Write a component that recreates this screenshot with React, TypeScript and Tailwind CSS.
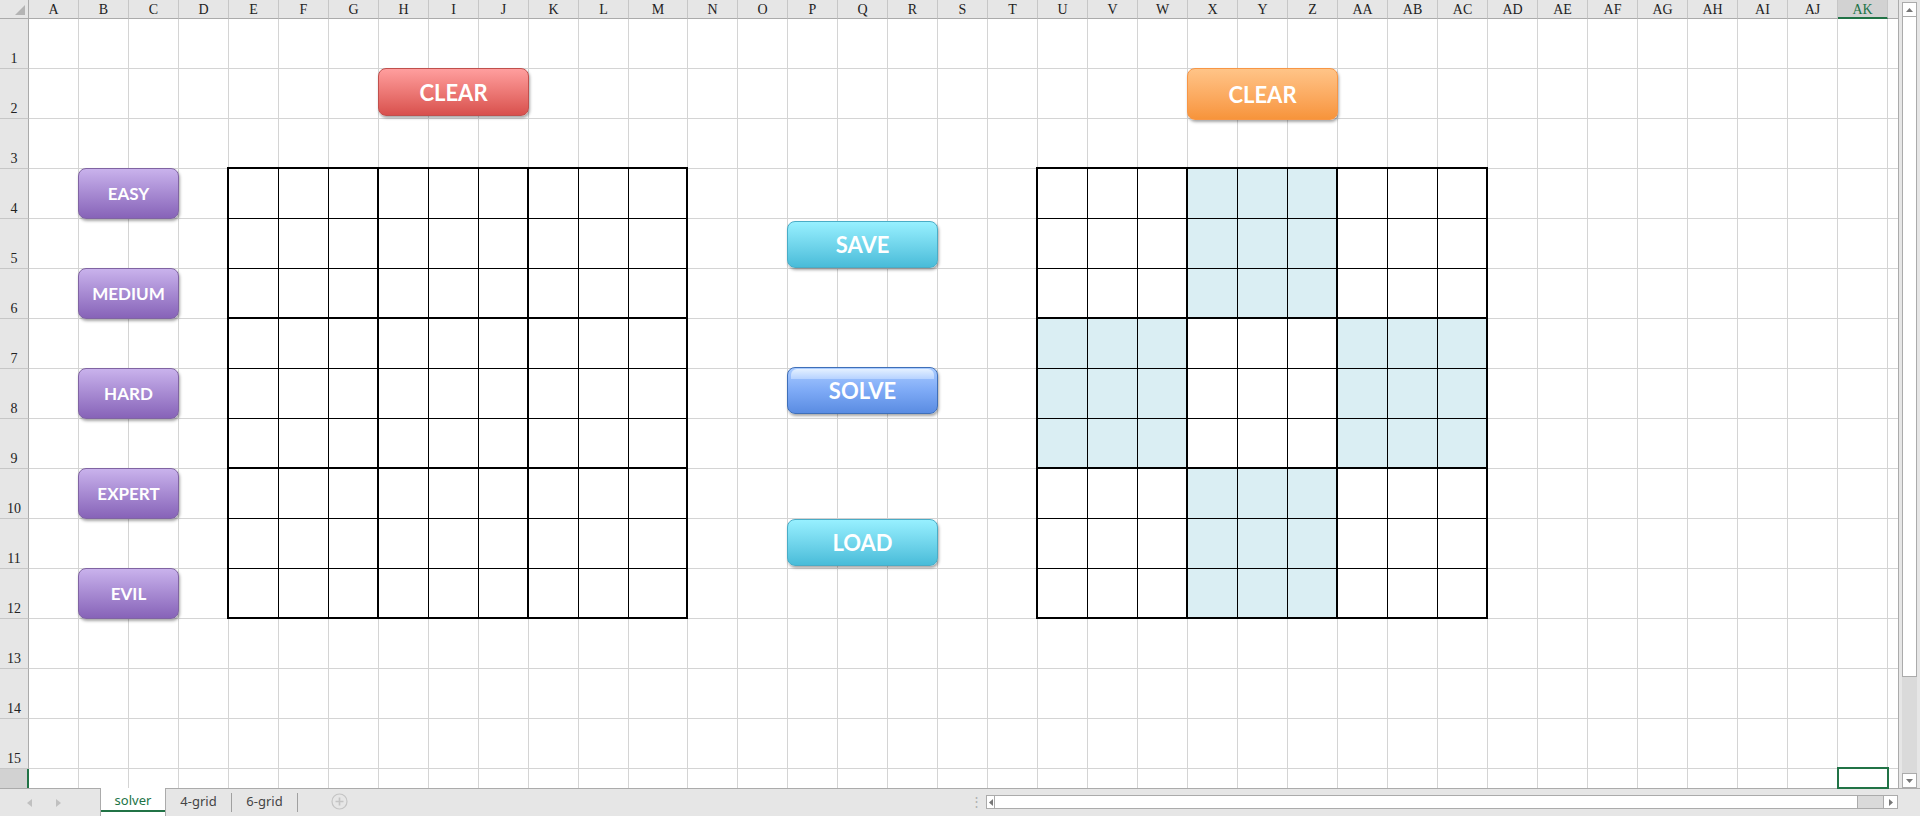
import React from "react";

const colNames: string[] = [];
for (let i = 0; i < 37; i++) {
  colNames.push(i < 26 ? String.fromCharCode(65 + i) : "A" + String.fromCharCode(65 + i - 26));
}
const rowNums = Array.from({ length: 15 }, (_, i) => i + 1);

function SheetHeader() {
  return (
    <>
      <div className="relative border-r border-b border-r-[#ababab] border-b-[#ababab] bg-[#e6e6e6]">
        <svg width="29" height="19" className="absolute inset-0">
          <polygon points="25,5 25,15 15,15" fill="#b4b4b4" />
        </svg>
      </div>
      {colNames.map((name) =>
        name === "AK" ? (
          <div
            key={name}
            className="flex items-center justify-center border-r border-b-2 border-r-[#c6c6c6] border-b-[#217346] bg-[#d2d2d2] pt-[1px] font-['Liberation_Serif',serif] text-[14px] text-[#217346]"
          >
            {name}
          </div>
        ) : (
          <div
            key={name}
            className="flex items-center justify-center border-r border-b border-r-[#c6c6c6] border-b-[#ababab] bg-[#e6e6e6] font-['Liberation_Serif',serif] text-[14px] text-[#222]"
          >
            {name}
          </div>
        )
      )}
      <div className="border-b border-b-[#ababab] bg-[#e6e6e6]" />
    </>
  );
}

function SheetRow({ n }: { n: number }) {
  return (
    <>
      <div className="flex items-end justify-center border-r border-b border-r-[#ababab] border-b-[#c6c6c6] bg-[#e6e6e6] pb-[1px] font-['Liberation_Serif',serif] text-[14px] leading-[16px] text-[#222]">
        {n}
      </div>
      {colNames.map((name) => (
        <div key={name} className="border-r border-b border-[#d4d4d4] bg-white" />
      ))}
      <div className="border-b border-[#d4d4d4] bg-white" />
    </>
  );
}

function LastRow() {
  return (
    <>
      <div className="border-r-2 border-r-[#217346] bg-[#d2d2d2]" />
      {colNames.map((name) => (
        <div key={name} className="border-r border-[#d4d4d4] bg-white" />
      ))}
      <div className="bg-white" />
    </>
  );
}

function Sudoku({ wideLast, shaded }: { wideLast?: boolean; shaded?: boolean }) {
  const cells = [];
  for (let r = 0; r < 9; r++) {
    for (let c = 0; c < 9; c++) {
      const box = Math.floor(r / 3) + Math.floor(c / 3);
      const fill = shaded && box % 2 === 1;
      cells.push(
        <div
          key={r * 9 + c}
          className={[
            "border-black",
            c % 3 === 2 ? "border-r-2" : "border-r",
            r % 3 === 2 ? "border-b-2" : "border-b",
            fill ? "bg-[#daeef3]" : "bg-white",
          ].join(" ")}
        />
      );
    }
  }
  return (
    <div
      className={
        wideLast
          ? "-ml-[2px] -mt-[2px] grid h-[452px] w-[461px] grid-cols-[repeat(8,50px)_59px] grid-rows-[repeat(9,50px)] border-l-2 border-t-2 border-black"
          : "-ml-[2px] -mt-[2px] grid h-[452px] w-[452px] grid-cols-[repeat(9,50px)] grid-rows-[repeat(9,50px)] border-l-2 border-t-2 border-black"
      }
    >
      {cells}
    </div>
  );
}

function ShapeButton({ label, className }: { label: string; className: string }) {
  return (
    <div
      className={
        "flex items-center justify-center rounded-[8px] border font-['Lato',sans-serif] font-bold text-white shadow-[1px_2px_3px_rgba(0,0,0,0.35)] " +
        className
      }
    >
      {label}
    </div>
  );
}

const purple =
  "-ml-px -mt-px h-[51px] w-[101px] border-[#8064a2] bg-gradient-to-b from-[#c9b2ec] to-[#8763b8] text-[17px]";
const cyan =
  "-ml-px h-[47px] w-[151px] border-[#4aacc6] bg-gradient-to-b from-[#97f0ff] to-[#48bcd9] text-[22px]";

function Overlay() {
  return (
    <div className="pointer-events-none absolute inset-0 grid grid-cols-[29px_repeat(12,50px)_59px_repeat(24,50px)_10px] grid-rows-[19px_repeat(15,50px)_19px]">
      <div className="col-start-9 col-span-3 row-start-3">
        <ShapeButton
          label="CLEAR"
          className="-ml-px -mt-px h-[48px] w-[151px] border-[#c0504d] bg-gradient-to-b from-[#ff9e9e] to-[#d8504d] text-[22px]"
        />
      </div>
      <div className="col-start-25 col-span-3 row-start-3">
        <ShapeButton
          label="CLEAR"
          className="-ml-px -mt-px h-[52px] w-[151px] border-[#f79646] bg-gradient-to-b from-[#ffc487] to-[#f7943a] text-[22px]"
        />
      </div>

      <div className="col-start-3 col-span-2 row-start-5">
        <ShapeButton label="EASY" className={purple} />
      </div>
      <div className="col-start-3 col-span-2 row-start-7">
        <ShapeButton label="MEDIUM" className={purple} />
      </div>
      <div className="col-start-3 col-span-2 row-start-9">
        <ShapeButton label="HARD" className={purple} />
      </div>
      <div className="col-start-3 col-span-2 row-start-11">
        <ShapeButton label="EXPERT" className={purple} />
      </div>
      <div className="col-start-3 col-span-2 row-start-13">
        <ShapeButton label="EVIL" className={purple} />
      </div>

      <div className="col-start-17 col-span-3 row-start-6 pt-[2px]">
        <ShapeButton label="SAVE" className={cyan} />
      </div>
      <div className="col-start-17 col-span-3 row-start-9 -mt-[2px]">
        <div className="relative -ml-px h-[47px] w-[151px] overflow-hidden rounded-[8px] border border-[#3f6fb8] bg-gradient-to-b from-[#a9cbff] via-[#7eaaf6] to-[#5a8ce2] shadow-[1px_2px_3px_rgba(0,0,0,0.35)]">
          <div className="absolute inset-x-[3px] top-[1px] h-[10px] rounded-t-[6px] bg-gradient-to-b from-[#e4f0ff] to-[#b6d2ff]" />
          <div className="relative flex h-full items-center justify-center font-['Lato',sans-serif] text-[22px] font-bold text-white">
            SOLVE
          </div>
        </div>
      </div>
      <div className="col-start-17 col-span-3 row-start-12">
        <ShapeButton label="LOAD" className={cyan} />
      </div>

      <div className="col-start-6 col-span-9 row-start-5 row-span-9">
        <Sudoku wideLast />
      </div>
      <div className="col-start-22 col-span-9 row-start-5 row-span-9">
        <Sudoku shaded />
      </div>

      <div className="col-start-38 row-start-17">
        <div className="-ml-px -mt-[2px] h-[22px] w-[52px] border-2 border-[#217346]" />
      </div>
    </div>
  );
}

function VScroll() {
  return (
    <div className="flex w-[21px] flex-col bg-[#e6e6e6] px-[3px] pt-[2px]">
      <div className="flex h-[15px] items-center justify-center border border-[#ababab] bg-white">
        <svg width="7" height="4">
          <polygon points="3.5,0 7,4 0,4" fill="#777" />
        </svg>
      </div>
      <div className="h-[660px] border-x border-b border-[#ababab] bg-white" />
      <div className="flex-1 bg-[#dadada]" />
      <div className="flex h-[15px] items-center justify-center border border-[#ababab] bg-white">
        <svg width="7" height="4">
          <polygon points="0,0 7,0 3.5,4" fill="#777" />
        </svg>
      </div>
    </div>
  );
}

function TabBar() {
  return (
    <div className="flex h-[28px] border-t border-[#ababab] bg-[#e6e6e6] font-['Noto_Sans',sans-serif] text-[13px]">
      <div className="flex w-[100px] items-center gap-[24px] pl-[27px]">
        <svg width="5" height="8">
          <polygon points="5,0 5,8 0,4" fill="#c0c0c0" />
        </svg>
        <svg width="5" height="8">
          <polygon points="0,0 5,4 0,8" fill="#c0c0c0" />
        </svg>
      </div>
      <div className="relative -mt-px flex w-[66px] items-center justify-center border-x border-[#ababab] bg-white pb-[2px] text-[#217346]">
        solver
        <div className="absolute bottom-[4px] left-0 right-0 h-[2px] bg-[#217346]" />
      </div>
      <div className="flex w-[65px] items-center justify-center pb-[2px] text-[#444]">4-grid</div>
      <div className="my-[4px] w-px bg-[#a0a0a0]" />
      <div className="flex w-[65px] items-center justify-center pb-[2px] text-[#444]">6-grid</div>
      <div className="my-[4px] w-px bg-[#a0a0a0]" />
      <div className="flex w-[82px] items-center justify-center pb-[2px]">
        <svg width="17" height="17" viewBox="0 0 17 17">
          <circle cx="8.5" cy="8.5" r="7.5" fill="none" stroke="#c4c4c4" strokeWidth="1.2" />
          <path d="M8.5 4.5v8M4.5 8.5h8" stroke="#c4c4c4" strokeWidth="1.6" />
        </svg>
      </div>
      <div className="flex-1" />
      <div className="flex w-[20px] items-center justify-center pb-[2px] text-[#b0b0b0]">⋮</div>
      <div className="mr-[22px] mt-[6px] mb-[7px] flex w-[912px] border border-[#ababab] bg-white">
        <div className="flex w-[8px] items-center justify-center border-r border-[#ababab]">
          <svg width="4" height="7">
            <polygon points="4,0 4,7 0,3.5" fill="#777" />
          </svg>
        </div>
        <div className="flex-1 border-r border-[#ababab]" />
        <div className="w-[25px] bg-[#dadada]" />
        <div className="flex w-[14px] items-center justify-center border-l border-[#ababab]">
          <svg width="4" height="7">
            <polygon points="0,0 4,3.5 0,7" fill="#777" />
          </svg>
        </div>
      </div>
    </div>
  );
}

export default function App() {
  return (
    <div className="flex h-[816px] w-[1920px] flex-col overflow-hidden bg-white">
      <div className="flex h-[788px]">
        <div className="relative grid w-[1899px] grid-cols-[29px_repeat(12,50px)_59px_repeat(24,50px)_10px] grid-rows-[19px_repeat(15,50px)_19px] border-r border-[#ababab]">
          <SheetHeader />
          {rowNums.map((n) => (
            <SheetRow key={n} n={n} />
          ))}
          <LastRow />
          <Overlay />
        </div>
        <VScroll />
      </div>
      <TabBar />
    </div>
  );
}
